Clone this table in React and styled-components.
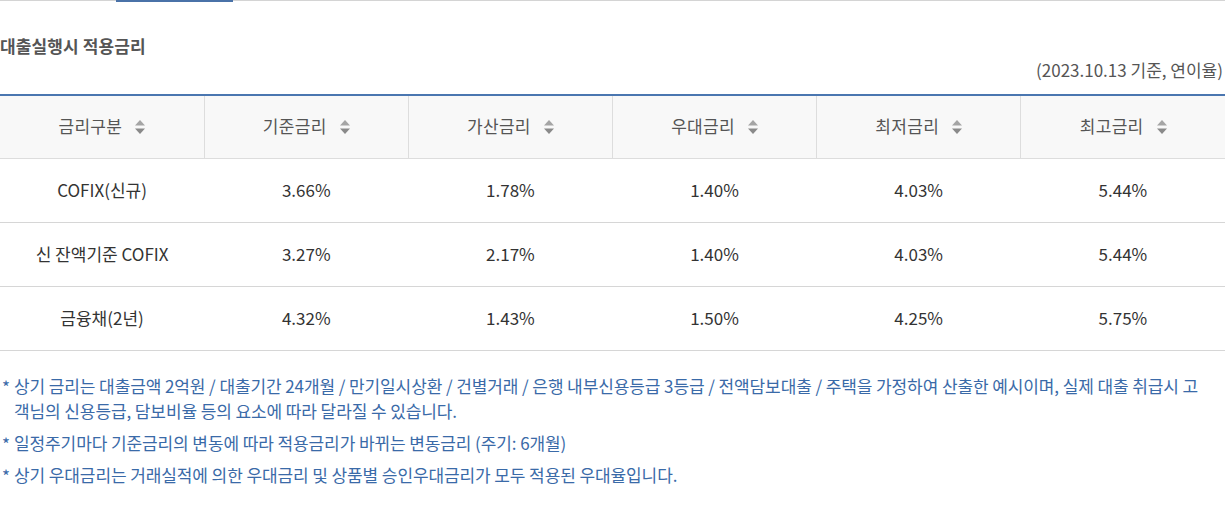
import React from 'react'
import styled, { createGlobalStyle } from 'styled-components'

const rows = [
    ['COFIX(신규)', '3.66%', '1.78%', '1.40%', '4.03%', '5.44%'],
    ['신 잔액기준 COFIX', '3.27%', '2.17%', '1.40%', '4.03%', '5.44%'],
    ['금융채(2년)', '4.32%', '1.43%', '1.50%', '4.25%', '5.75%'],
]

const heads = ['금리구분', '기준금리', '가산금리', '우대금리', '최저금리', '최고금리']

const notes = [
    '상기 금리는 대출금액 2억원 / 대출기간 24개월 / 만기일시상환 / 건별거래 / 은행 내부신용등급 3등급 / 전액담보대출 / 주택을 가정하여 산출한 예시이며, 실제 대출 취급시 고객님의 신용등급, 담보비율 등의 요소에 따라 달라질 수 있습니다.',
    '일정주기마다 기준금리의 변동에 따라 적용금리가 바뀌는 변동금리 (주기: 6개월)',
    '상기 우대금리는 거래실적에 의한 우대금리 및 상품별 승인우대금리가 모두 적용된 우대율입니다.',
]

const SortIcon = () => (
    <svg width="10" height="14" viewBox="0 0 10 14">
        <path d="M5 0 L10 5.5 L0 5.5 Z" fill="#a5a5a5" />
        <path d="M5 14 L10 8.5 L0 8.5 Z" fill="#8a8a8a" />
    </svg>
)

const App = () => {
    return (
        <Page>
            <GlobalStyle />
            <TabLine>
                <TabActive />
            </TabLine>
            <Title>대출실행시 적용금리</Title>
            <DateNote>(2023.10.13 기준, 연이율)</DateNote>
            <Table>
                <thead>
                    <tr>
                        {heads.map((h) => (
                            <Th key={h}>
                                <HeadInner>
                                    {h}
                                    <SortIcon />
                                </HeadInner>
                            </Th>
                        ))}
                    </tr>
                </thead>
                <tbody>
                    {rows.map((r) => (
                        <tr key={r[0]}>
                            {r.map((c, i) => (
                                <Td key={i}>{c}</Td>
                            ))}
                        </tr>
                    ))}
                </tbody>
            </Table>
            <Notes>
                {notes.map((n) => (
                    <Note key={n}>{n}</Note>
                ))}
            </Notes>
        </Page>
    )
}

export default App

const GlobalStyle = createGlobalStyle`
body {
    margin:0;
    background:#fff;
    font-family:"Noto Sans CJK KR", "Noto Sans", sans-serif;
}
`

const Page = styled.div`
width:1225px;
`

const TabLine = styled.div`
height:1px;
background:#d4d4d4;
position:relative;
`

const TabActive = styled.div`
position:absolute;
left:116px;
top:0;
width:117px;
height:2px;
background:#4a72a8;
`

const Title = styled.h3`
margin:0;
padding-top:33px;
font-size:17px;
line-height:24px;
font-weight:700;
color:#555;
letter-spacing:0.1px;
`

const DateNote = styled.div`
text-align:right;
padding-right:2px;
font-size:17px;
line-height:24px;
color:#555;
letter-spacing:0;
`

const Table = styled.table`
margin-top:12px;
width:100%;
border-collapse:collapse;
table-layout:fixed;
border-top:2px solid #4a76b0;
`

const Th = styled.th`
height:59px;
background:#f8f8f8;
border-bottom:1px solid #ddd;
border-left:1px solid #ddd;
font-weight:400;
font-size:17px;
color:#555;
padding:0 0 3px;
&:first-child{border-left:none;}
`

const HeadInner = styled.span`
display:inline-flex;
align-items:center;
gap:13px;
letter-spacing:0.3px;
svg{margin-top:2px;}
`

const Td = styled.td`
height:60px;
text-align:center;
border-bottom:1px solid #d6d6d6;
font-size:17px;
color:#333;
padding:0 0 3px;
`

const Notes = styled.ul`
list-style:none;
margin:22px 0 0;
padding:0 12px 0 2px;
`

const Note = styled.li`
position:relative;
padding-left:12px;
font-size:17px;
line-height:25px;
color:#3a6aa8;
margin-bottom:7px;
letter-spacing:-0.1px;
&::before{
    content:'*';
    position:absolute;
    left:0;
    top:1px;
}
`
